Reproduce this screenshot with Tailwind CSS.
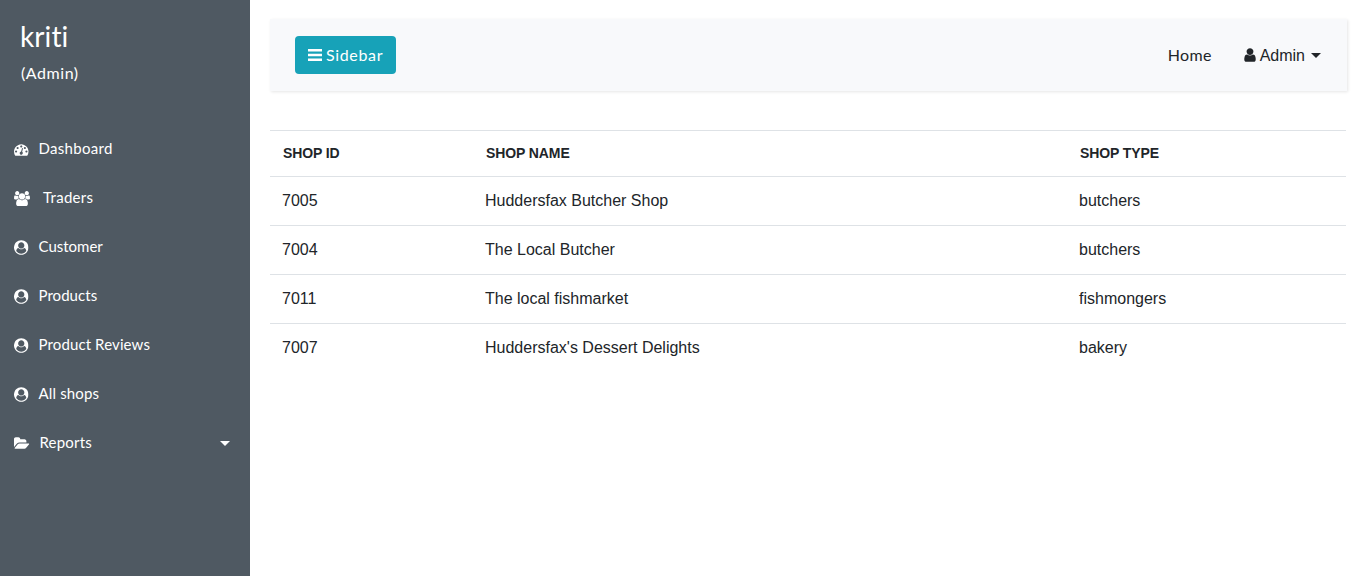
<!DOCTYPE html>
<html lang="en">
<head>
<meta charset="utf-8">
<title>Admin - Shops</title>
<script src="https://cdn.jsdelivr.net/npm/@tailwindcss/browser@4"></script>
</head>
<body class="flex h-screen overflow-hidden bg-white font-['Liberation_Sans',Arial,sans-serif] text-base text-[#212529]">
<svg class="hidden">
  <symbol id="user-circle" viewBox="0 0 1792 1792"><path d="M1523 1339q-22-155-87.5-257.5T1251 963q-67 74-159.5 115.5T896 1120t-195.5-41.5T541 963q-119 16-184.5 118.5T269 1339q106 150 271 237.5t356 87.5 356-87.5 271-237.5zm-243-699q0-159-112.5-271.5T896 256 624.5 368.5 512 640t112.5 271.5T896 1024t271.5-112.5T1280 640zm512 256q0 182-71 347.5t-190.5 286T1245 1721t-349 71q-182 0-348-71t-286-191-191-286T0 896t71-348 191-286T548 71 896 0t348 71 286 191 191 286 71 348z"/></symbol>
</svg>
<aside class="flex w-[250px] shrink-0 flex-col bg-[#4f5962] font-[Lato,sans-serif] text-white">
  <header class="h-[124px] px-5 pt-[19px]">
    <h3 class="text-[28px] leading-[34px] tracking-[0.1px]">kriti</h3>
    <p class="mt-2 pl-px text-base leading-6 tracking-[0.55px]">(Admin)</p>
  </header>
  <nav>
    <ul class="text-[15px] leading-[49px]">
      <li class="flex h-[49px] items-center pl-[14px]"><svg class="mr-[10px] mt-px h-[15px] w-[14.5px] fill-current" viewBox="0 0 1792 1792"><path d="M384 1152q0-53-37.5-90.5T256 1024t-90.5 37.5T128 1152t37.5 90.5T256 1280t90.5-37.5T384 1152zm192-448q0-53-37.5-90.5T448 576t-90.5 37.5T320 704t37.5 90.5T448 832t90.5-37.5T576 704zm428 481l101-382q6-26-7.5-48.5T1059 725t-48 6.5-30 39.5l-101 382q-60 5-107 43.5t-63 98.5q-20 77 20 146t117 89 146-20 89-117q16-60-6-117t-72-91zm660-33q0-53-37.5-90.5t-90.5-37.5-90.5 37.5-37.5 90.5 37.5 90.5 90.5 37.5 90.5-37.5 37.5-90.5zm-640-640q0-53-37.5-90.5T896 384t-90.5 37.5T768 512t37.5 90.5T896 640t90.5-37.5T1024 512zm448 192q0-53-37.5-90.5T1344 576t-90.5 37.5T1216 704t37.5 90.5T1344 832t90.5-37.5T1472 704zm320 448q0 261-141 483-19 29-54 29H195q-35 0-54-29Q0 1414 0 1152q0-182 71-348t191-286 286-191 348-71 348 71 286 191 191 286 71 348z"/></svg><span class="tracking-[0.3px]">Dashboard</span></li>
      <li class="flex h-[49px] items-center pl-[14px]"><svg class="mr-[13px] mt-px h-[15px] w-4 fill-current" viewBox="0 0 1920 1792"><path d="M593 896q-162 5-265 128H194q-82 0-138-40.5T0 865q0-353 124-353 6 0 43.5 21t97.5 42.5T384 597q67 0 133-23-5 37-5 66 0 139 81 256zm1071 637q0 120-73 189.5t-194 69.5H523q-121 0-194-69.5T256 1533q0-53 3.5-103.5t14-109T300 1212t43-97.5 62-81 85.5-53.5T602 960q10 0 43 21.5t73 48 107 48 135 21.5 135-21.5 107-48 73-48 43-21.5q61 0 111.5 20t85.5 53.5 62 81 43 97.5 26.5 108.5 14 109 3.5 103.5zM640 256q0 106-75 181t-181 75-181-75-75-181 75-181T384 0t181 75 75 181zm704 384q0 159-112.5 271.5T960 1024 688.5 911.5 576 640t112.5-271.5T960 256t271.5 112.5T1344 640zm576 225q0 78-56 118.5t-138 40.5h-134q-103-123-265-128 81-117 81-256 0-29-5-66 66 23 133 23 59 0 119-21.5t97.5-42.5 43.5-21q124 0 124 353zm-128-609q0 106-75 181t-181 75-181-75-75-181 75-181 181-75 181 75 75 181z"/></svg><span class="tracking-[0.3px]">Traders</span></li>
      <li class="flex h-[49px] items-center pl-[14px]"><svg class="mr-[10px] mt-px h-[15px] w-[14.5px] fill-current"><use href="#user-circle"/></svg><span>Customer</span></li>
      <li class="flex h-[49px] items-center pl-[14px]"><svg class="mr-[10px] mt-px h-[15px] w-[14.5px] fill-current"><use href="#user-circle"/></svg><span class="tracking-[0.05px]">Products</span></li>
      <li class="flex h-[49px] items-center pl-[14px]"><svg class="mr-[10px] mt-px h-[15px] w-[14.5px] fill-current"><use href="#user-circle"/></svg><span class="tracking-[0.12px]">Product Reviews</span></li>
      <li class="flex h-[49px] items-center pl-[14px]"><svg class="mr-[10px] mt-px h-[15px] w-[14.5px] fill-current"><use href="#user-circle"/></svg><span class="tracking-[0.15px]">All shops</span></li>
      <li class="flex h-[49px] items-center pl-[14px] pr-5"><svg class="mr-[10px] mt-px h-[15px] w-[15.5px] fill-current" viewBox="0 0 1920 1792"><path d="M1879 952q0 31-31 66l-336 396q-43 51-120.5 86.5T1248 1536H160q-34 0-60.5-13T73 1480q0-31 31-66l336-396q43-51 120.5-86.5T704 896h1088q34 0 60.5 13t26.5 43zm-343-344v160H704q-94 0-197 47.5T343 935L6 1331l-5 6q0-4-.5-12.5T0 1312V352q0-92 66-158t158-66h320q92 0 158 66t66 158v32h544q92 0 158 66t66 158z"/></svg><span class="tracking-[0.2px]">Reports</span><i class="ml-auto mt-[2px] border-x-[5px] border-t-[5px] border-x-transparent border-t-white"></i></li>
    </ul>
  </nav>
</aside>
<main class="min-w-0 flex-1 pl-5 pr-5 pt-[19px]">
  <nav class="flex h-[72px] w-[1077px] items-center bg-[#f8f9fb] pl-[25px] pr-[26px] shadow-[1px_1px_3px_rgba(0,0,0,0.1)]">
    <button class="flex h-[38px] w-[101px] items-center rounded bg-[#17a2b8] pl-[13px] font-[Lato,sans-serif] text-white"><svg class="mr-1 h-3 w-[14px] fill-current" viewBox="0 0 14 12"><path d="M0 0h14v2.4H0zM0 4.8h14v2.4H0zM0 9.6h14V12H0z"/></svg><span class="tracking-[0.65px]">Sidebar</span></button>
    <span class="ml-auto font-[Lato,sans-serif] tracking-[0.3px]">Home</span>
    <span class="ml-8 flex items-center"><svg class="mr-1 h-4 w-3 fill-current" viewBox="0 0 1280 1792"><path d="M1280 1399q0 109-62.5 187T1067 1664H213q-88 0-150.5-78T0 1399q0-85 8.5-160.5t31.5-152 58.5-131 94-89T327 832q131 128 313 128t313-128q76 0 134.5 34.5t94 89 58.5 131 31.5 152 8.5 160.5zm-256-887q0 159-112.5 271.5T640 896 368.5 783.5 256 512t112.5-271.5T640 128t271.5 112.5T1024 512z"/></svg><span class="pt-[2px] leading-6">Admin</span><i class="ml-[6px] border-x-[5px] border-t-[5px] border-x-transparent border-t-[#212529]"></i></span>
  </nav>
  <table class="mt-[39px] w-[1076px] table-fixed border-collapse text-left">
    <colgroup><col class="w-[203px]"><col class="w-[594px]"><col></colgroup>
    <thead><tr class="h-[46px] border-y border-[#dee2e6] text-sm leading-[21px] tracking-[-0.1px]"><th class="pl-[13px]">SHOP ID</th><th class="pl-[13px]">SHOP NAME</th><th class="pl-[13px]">SHOP TYPE</th></tr></thead>
    <tbody>
      <tr class="h-[49px] border-b border-[#dee2e6]"><td class="pl-3">7005</td><td class="pl-3">Huddersfax Butcher Shop</td><td class="pl-3">butchers</td></tr>
      <tr class="h-[49px] border-b border-[#dee2e6]"><td class="pl-3">7004</td><td class="pl-3">The Local Butcher</td><td class="pl-3">butchers</td></tr>
      <tr class="h-[49px] border-b border-[#dee2e6]"><td class="pl-3">7011</td><td class="pl-3">The local fishmarket</td><td class="pl-3">fishmongers</td></tr>
      <tr class="h-[49px]"><td class="pl-3">7007</td><td class="pl-3">Huddersfax's Dessert Delights</td><td class="pl-3">bakery</td></tr>
    </tbody>
  </table>
</main>
</body>
</html>
